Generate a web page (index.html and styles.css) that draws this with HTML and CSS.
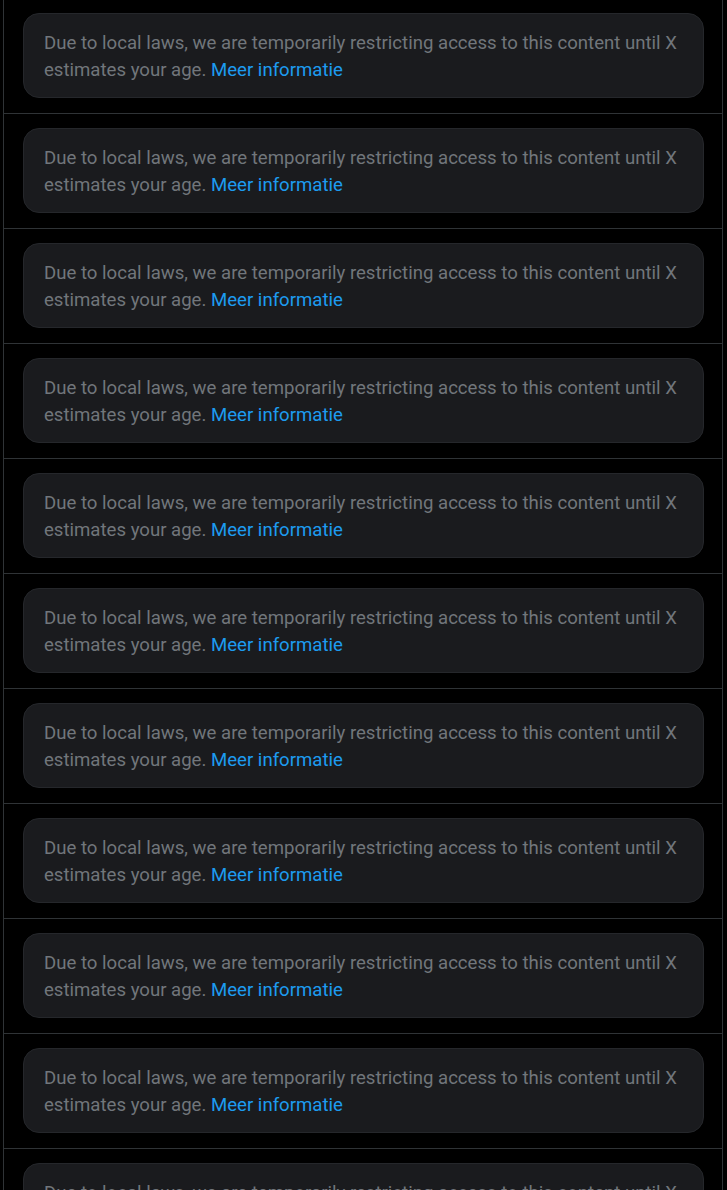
FILE: index.html
```html
<!DOCTYPE html>
<html lang="en">
    <head>
        <meta charset="UTF-8">
        <meta name="viewport" content="width=device-width, initial-scale=1.0">
        <title>Timeline</title>
        <link rel="stylesheet" href="styles.css">
    </head>
    <body>
        <div class="timeline">
            <div class="cell"><div class="notice">Due to local laws, we are temporarily restricting access to this content until X estimates your age. <a href="#">Meer informatie</a></div></div>
            <div class="cell"><div class="notice">Due to local laws, we are temporarily restricting access to this content until X estimates your age. <a href="#">Meer informatie</a></div></div>
            <div class="cell"><div class="notice">Due to local laws, we are temporarily restricting access to this content until X estimates your age. <a href="#">Meer informatie</a></div></div>
            <div class="cell"><div class="notice">Due to local laws, we are temporarily restricting access to this content until X estimates your age. <a href="#">Meer informatie</a></div></div>
            <div class="cell"><div class="notice">Due to local laws, we are temporarily restricting access to this content until X estimates your age. <a href="#">Meer informatie</a></div></div>
            <div class="cell"><div class="notice">Due to local laws, we are temporarily restricting access to this content until X estimates your age. <a href="#">Meer informatie</a></div></div>
            <div class="cell"><div class="notice">Due to local laws, we are temporarily restricting access to this content until X estimates your age. <a href="#">Meer informatie</a></div></div>
            <div class="cell"><div class="notice">Due to local laws, we are temporarily restricting access to this content until X estimates your age. <a href="#">Meer informatie</a></div></div>
            <div class="cell"><div class="notice">Due to local laws, we are temporarily restricting access to this content until X estimates your age. <a href="#">Meer informatie</a></div></div>
            <div class="cell"><div class="notice">Due to local laws, we are temporarily restricting access to this content until X estimates your age. <a href="#">Meer informatie</a></div></div>
            <div class="cell"><div class="notice">Due to local laws, we are temporarily restricting access to this content until X estimates your age. <a href="#">Meer informatie</a></div></div>
        </div>
    </body>
</html>
```

FILE: styles.css
```css
* {
    box-sizing: border-box;
}

html {
    background: #000;
}

body {
    margin: 0;
    font-family: Roboto, "Liberation Sans", sans-serif;
}

/* the feed column, scrolled so the first divider is just out of view */
.timeline {
    width: 720px;
    margin: -2px 0 0 3px;
    border-left: 1px solid #2f3336;
    border-right: 1px solid #2f3336;
}

.cell {
    padding: 14px 18px 15px 19px;
    border-top: 1px solid #2f3336;
}

.notice {
    padding: 16px 20px 13px 20px;
    border: 1px solid #25272b;
    border-radius: 16px;
    background: #1a1b1e;
    color: #71767b;
    font-size: 18.6px;
    line-height: 27px;
}

.notice a {
    color: #1d9bf0;
    text-decoration: none;
}
```
